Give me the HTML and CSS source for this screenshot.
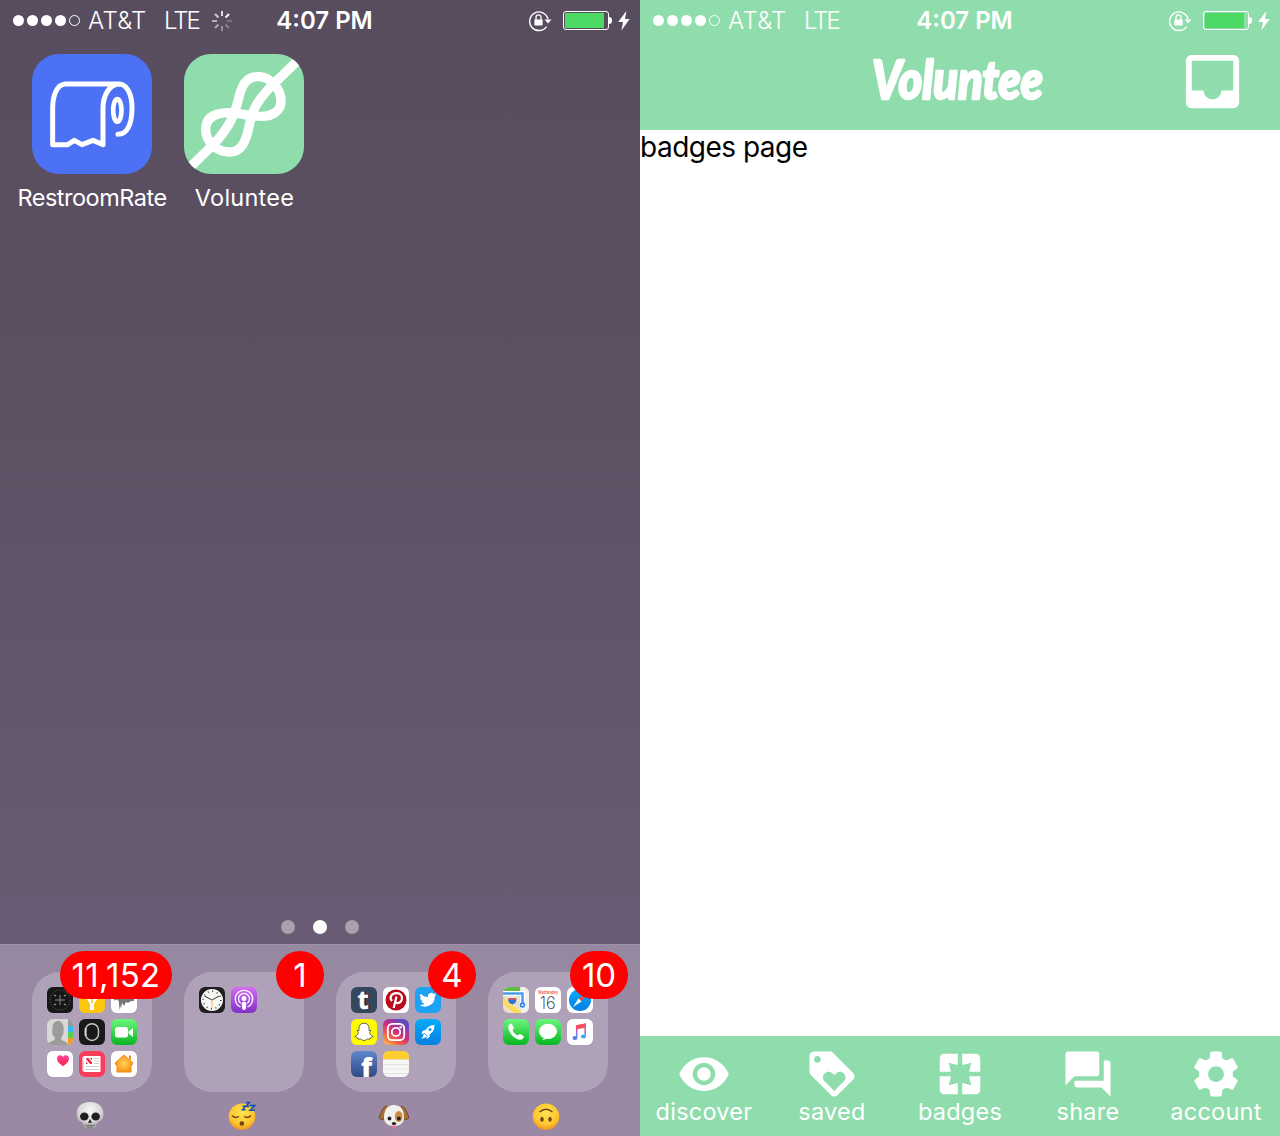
FILE: index.html
```html
<!DOCTYPE html>
<html lang="en">
<head>
<meta charset="utf-8">
<title>Voluntee</title>
<link rel="stylesheet" href="styles.css">
</head>
<body>
<svg class="defs" aria-hidden="true">
  <defs>
    <linearGradient id="green" x2="0" y2="1"><stop stop-color="#6bf77c"/><stop offset="1" stop-color="#08b522"/></linearGradient>
    <linearGradient id="purple" x2="0" y2="1"><stop stop-color="#d56bf5"/><stop offset="1" stop-color="#8130c4"/></linearGradient>
    <linearGradient id="fb" x2="0" y2="1"><stop stop-color="#5f86cd"/><stop offset="1" stop-color="#2d4985"/></linearGradient>
    <linearGradient id="sky" x2="0" y2="1"><stop stop-color="#03abfb"/><stop offset="1" stop-color="#087fe0"/></linearGradient>
    <linearGradient id="music" x2="0" y2="1"><stop stop-color="#fb4d65"/><stop offset=".55" stop-color="#b45fe0"/><stop offset="1" stop-color="#3fa6f5"/></linearGradient>
    <linearGradient id="insta" x1="0" y1="1" x2=".7" y2="0"><stop stop-color="#fdc75a"/><stop offset=".3" stop-color="#f5673f"/><stop offset=".6" stop-color="#cb2d80"/><stop offset="1" stop-color="#5b4bc4"/></linearGradient>
    <linearGradient id="heart" x2="0" y2="1"><stop stop-color="#ff3fa0"/><stop offset="1" stop-color="#f9283c"/></linearGradient>
    <radialGradient id="home"><stop stop-color="#ffd35c"/><stop offset="1" stop-color="#f99514"/></radialGradient>
    <radialGradient id="face" cx=".5" cy=".35" r=".65"><stop stop-color="#ffe450"/><stop offset=".7" stop-color="#fdc52f"/><stop offset="1" stop-color="#ec9420"/></radialGradient>
    <radialGradient id="bone" cx=".5" cy=".3" r=".7"><stop stop-color="#f7f7f7"/><stop offset=".6" stop-color="#d7d7d9"/><stop offset="1" stop-color="#87878d"/></radialGradient>
    <symbol id="rotation-lock" viewBox="0 0 24 22">
      <path d="M18.6 16.6A9.3 9.3 0 1 1 20 9" fill="none" stroke="#fff" stroke-width="1.4"/>
      <path d="M16.500 9.500h7l-3.500 4z" fill="#fff"/>
      <rect x="6.400" y="9.400" width="8.200" height="6" rx=".6" fill="#fff"/>
      <path d="M8 10V7.300a2.500 2.500 0 0 1 5 0V10" fill="none" stroke="#fff" stroke-width="1.300"/>
    </symbol>
    <symbol id="bolt" viewBox="0 0 12 20"><path d="M8.300 0 .2 11H5L3.400 19.600 11.700 8H7z" fill="#fff"/></symbol>
  </defs>
</svg>

<main class="screens">
  <section class="screen home">
    <header class="status">
      <div class="status-left">
        <span class="signal"><i></i><i></i><i></i><i></i><i class="empty"></i></span>
        <span class="carrier">AT&amp;T</span><span class="network">LTE</span>
        <svg class="spinner" viewBox="-10 -10 20 20" stroke="#fff" stroke-width="1.9">
          <path d="M0-5V-10" opacity=".85"/><path d="M3.5-3.5 7-7"/><path d="M5 0H10" opacity=".2"/><path d="M3.5 3.5 7 7" opacity=".3"/><path d="M0 5V10" opacity=".4"/><path d="M-3.5 3.5-7 7" opacity=".5"/><path d="M-5 0H-10" opacity=".6"/><path d="M-3.5-3.5-7-7" opacity=".7"/>
        </svg>
      </div>
      <time class="clock">4:07 PM</time>
      <div class="status-right">
        <svg class="lock"><use href="#rotation-lock"/></svg>
        <span class="battery"></span>
        <svg class="bolt"><use href="#bolt"/></svg>
      </div>
    </header>

    <div class="apps">
      <div class="app">
        <svg class="app-icon blue" viewBox="96 162 360 360" fill="none" stroke="#fff" stroke-width="15" stroke-linecap="round" stroke-linejoin="round">
          <path d="M357 252H195C168 255 158 290 158 325V434H203L223 421 246 434 279 421 309 434V325C309 288 327 253 357 252C382 252 396 285 396 325C396 375 380 403 354 403"/>
          <ellipse cx="352" cy="331" rx="12.5" ry="34" stroke-width="14"/>
        </svg>
        <span class="app-name rate">RestroomRate</span>
      </div>
      <div class="app">
        <svg class="app-icon mint" viewBox="552 162 360 360" fill="none" stroke="#fff" stroke-width="28">
          <path d="M560 512 645 428C690 380 705 340 716 295C728 240 750 229 778 230C810 232 843 265 843 303C843 335 815 349 785 349C745 349 715 337 685 338C645 339 617 352 617 388C617 425 650 457 690 456C722 455 736 430 746 385C756 330 770 305 810 262L905 170"/>
        </svg>
        <span class="app-name volun">Voluntee</span>
      </div>
    </div>

    <div class="pager"><i></i><i class="current"></i><i></i></div>

    <footer class="dock">
      <div class="folder">
        <div class="folder-box">
          <svg class="mini" viewBox="0 0 26 26"><rect width="26" height="26" fill="#171719"/><circle cx="13" cy="13" r="10" fill="none" stroke="#666" stroke-width="1" stroke-dasharray="1 1.4"/><path d="M13 8v10M8 13h10" stroke="#888"/><path d="M7 8l2 1M19 8l-2 1M7 18l2-1M19 18l-2-1" stroke="#bbb"/></svg>
          <svg class="mini" viewBox="0 0 26 26"><rect width="26" height="26" fill="#fdc60a"/><path d="M6 9l5 8v6h4v-6l5-8z" fill="#fff"/><path d="M13 12v4" stroke="#fdc60a" stroke-width="1.5"/></svg>
          <svg class="mini" viewBox="0 0 26 26"><rect width="26" height="26" fill="#fff"/><path d="M3 13.500l3-1 2 2V24l1-6 1 4 1-6 2 3 2-4 2 1 3-2h3v-2H3z" fill="#77777b"/></svg>
          <svg class="mini" viewBox="0 0 26 26"><rect width="26" height="26" fill="#d8d8d6"/><path d="M21 0h5v7h-5z" fill="#999"/><path d="M21 7h5v6h-5z" fill="#35b9ef"/><path d="M21 13h5v6h-5z" fill="#55cf5a"/><path d="M21 19h5v7h-5z" fill="#f79a20"/><path d="M1 26c1-5 7-3 7-7-3-3-3-6-2.500-11C6 3 9 2 11 2s5 1 5.500 6c.5 5 0 8-2.500 11 0 4 6 2 7 7z" fill="#9b9b99"/></svg>
          <svg class="mini" viewBox="0 0 26 26"><rect width="26" height="26" fill="#19191b"/><rect x="6.500" y="4.700" width="13" height="16.800" rx="6.500" fill="none" stroke="#c9c9c6" stroke-width="1.400"/><path d="M6.600 9v8" stroke="#ddd" stroke-width="1.800"/></svg>
          <svg class="mini" viewBox="0 0 26 26"><rect width="26" height="26" fill="url(#green)"/><rect x="4" y="8" width="13" height="10.500" rx="2.500" fill="#fff"/><path d="M17.500 12.500 22 9v9l-4.500-3.500z" fill="#fff"/></svg>
          <svg class="mini" viewBox="0 0 26 26"><rect width="26" height="26" fill="#fff"/><path d="M16 15.300C12 12.500 10 10.500 10 7.700 10 4 14.500 3.200 16 6c1.500-2.800 6-2 6 1.700 0 2.800-2 4.800-6 7.600z" fill="url(#heart)"/></svg>
          <svg class="mini" viewBox="0 0 26 26"><rect width="26" height="26" fill="#fb3b5c"/><path d="M3 6h2v14H3z" fill="#f5a6b3"/><rect x="4.500" y="5" width="17" height="16" fill="#fff"/><path d="M7 7h2.500l3.500 4.500V13h-2L7.500 8.500z" fill="#e92543"/><path d="M7 10.500l2 2.500H7zM13 9.500 11 7h2z" fill="#e92543"/><path d="M15 7.500h5M15 10h5M15 12.500h5M7 15.500h13M7 18.500h13" stroke="#cfcfcf"/></svg>
          <svg class="mini" viewBox="0 0 26 26"><rect width="26" height="26" fill="#fff"/><path d="M13 4l9 8-1 2h-1v7H6v-7H5l-1-2z" fill="url(#home)" stroke="#f58b16"/><path d="M18 4.500h2v5l-2-2z" fill="#f58b16"/></svg>
        </div>
        <span class="badge wide">11,152</span>
        <svg class="emoji" viewBox="0 0 28 30" role="img" aria-label="💀"><path d="M14 1C5 1 .5 6 .5 13c0 4 1.200 6.500 4 7.500 2.300 1 3 2 3.500 5C8.500 28.500 10 29 14 29s5.500-.5 6-3.500c.5-3 1.200-4 3.500-5 2.800-1 4-3.500 4-7.500C27.500 6 23 1 14 1z" fill="url(#bone)"/><ellipse cx="8.300" cy="15.500" rx="4.300" ry="4" fill="#202022"/><ellipse cx="19.700" cy="15.500" rx="4.300" ry="4" fill="#202022"/><path d="M14 18l-2 4h1.500l.5-1 .5 1H16z" fill="#202022"/><path d="M9 24.200h10M12 24v3M16 24v3M14 24v3" stroke="#666" stroke-width=".8"/></svg>
      </div>
      <div class="folder">
        <div class="folder-box">
          <svg class="mini" viewBox="0 0 26 26"><rect width="26" height="26" fill="#1e1e20"/><circle cx="13" cy="13" r="11" fill="#f7f7f5"/><circle cx="13" cy="13" r="8.800" fill="none" stroke="#333" stroke-width="1.500" stroke-dasharray="1 3.608"/><path d="M5.500 9 13 13l7-4" fill="none" stroke="#333"/><path d="M13 12v9" stroke="#f2a65a" stroke-width=".8"/></svg>
          <svg class="mini" viewBox="0 0 26 26"><rect width="26" height="26" fill="url(#purple)"/><g fill="none" stroke="#fff" stroke-width="1.300"><path d="M9.500 20A8.700 8.700 0 1 1 16.500 20"/><path d="M9.700 16.300a5.500 5.500 0 1 1 6.600 0"/></g><circle cx="13" cy="11.500" r="2.500" fill="#fff"/><path d="M11 16q2-2 4 0l-.7 6q-1.300 1.500-2.600 0z" fill="#fff" stroke="#fff"/></svg>
        </div>
        <span class="badge">1</span>
        <svg class="emoji" viewBox="0 0 28 30" role="img" aria-label="😴"><circle cx="14" cy="15.700" r="13.300" fill="url(#face)"/><path d="M4 14.500q3.500 3.500 7 .8M16 15.300q3.500 2.700 7-.8" fill="none" stroke="#70441a" stroke-width="1.300"/><ellipse cx="13.800" cy="22.500" rx="2.300" ry="2.200" fill="#70441a"/><path d="M14.500 5.200h3l-3 3.600h3M18 1.500h3.500L18 5.500h3.500M22 4.500h5l-5 4.800h5" fill="none" stroke="#1650b5" stroke-width="1.500"/></svg>
      </div>
      <div class="folder">
        <div class="folder-box">
          <svg class="mini open" viewBox="0 0 26 26"><rect width="26" height="26" rx="6" fill="#35465d"/><g class="tumblr"><text x="8" y="22.300" fill="#111c2b" stroke="#111c2b">t</text><text x="6.800" y="21.500" fill="#fff" stroke="#fff">t</text></g></svg>
          <svg class="mini" viewBox="0 0 26 26"><rect width="26" height="26" fill="#fff"/><circle cx="13" cy="13" r="10.500" fill="#bd081c"/><path d="M10.700 21 13.500 9.500M9 14C5.500 10 9 6.200 13.500 6.200c4.300 0 6.200 3 5.300 6.300-1.100 4-5.400 4.500-6.700 2" fill="none" stroke="#fff" stroke-width="2.200"/></svg>
          <svg class="mini" viewBox="0 0 26 26"><rect width="26" height="26" fill="#1da1f2"/><path transform="translate(4 4) scale(.76)" d="M23 4.500a9 9 0 0 1-2.600.7 4.600 4.600 0 0 0 2-2.500 9 9 0 0 1-2.900 1.100 4.600 4.600 0 0 0-7.800 4.200A13 13 0 0 1 2.200 3.200a4.600 4.600 0 0 0 1.400 6.100 4.500 4.500 0 0 1-2.100-.6 4.600 4.600 0 0 0 3.700 4.600 4.600 4.600 0 0 1-2.100.1 4.600 4.600 0 0 0 4.300 3.200A9.200 9.200 0 0 1 .6 18.500 13 13 0 0 0 20.700 6.800 9.300 9.300 0 0 0 23 4.500z" fill="#fff"/></svg>
          <svg class="mini" viewBox="0 0 26 26"><rect width="26" height="26" fill="#fffc00"/><path d="M13 4.200c-3.500 0-5 2.400-5 5v2.300l-2-.1c0 1 1.500 1.500 1.500 2.300-.6 2-2 3-3.500 3.600 0 1.200 2 1.200 2.600 1.500l.5 1.300 2.400-.1c1.200.3 1.800 1.500 3.500 1.500s2.300-1.200 3.500-1.500l2.400.1.500-1.300c.6-.3 2.600-.3 2.600-1.500-1.500-.6-2.900-1.600-3.500-3.600 0-.8 1.500-1.300 1.500-2.300l-2 .1V9.200c0-2.600-1.500-5-5-5z" fill="#fff" stroke="#555" stroke-width=".9"/></svg>
          <svg class="mini" viewBox="0 0 26 26"><rect width="26" height="26" fill="url(#insta)"/><g fill="none" stroke="#fff" stroke-width="1.800"><rect x="4.800" y="4.800" width="16.400" height="16.400" rx="4.500"/><circle cx="13" cy="13" r="4.200"/></g><circle cx="17.700" cy="8.300" r="1.200" fill="#fff"/></svg>
          <svg class="mini" viewBox="0 0 26 26"><rect width="26" height="26" fill="url(#sky)"/><path d="M19.500 6C15 6 12.500 8 10.500 11L7.500 12 6.500 15l2.500-.5L8 17l-1.500 3L10 18.500l1.500-1v2.500l3-2 .5-3c3-2 4.500-4.500 4.500-9z" fill="#fff"/><circle cx="15" cy="10.500" r="1.500" fill="#0797ef"/><path d="M9 14l3.500 3.500" stroke="#0797ef" stroke-width=".8"/></svg>
          <svg class="mini open" viewBox="0 0 26 26"><rect width="26" height="26" rx="6" fill="url(#fb)"/><text class="facebook" x="10" y="25.500">f</text></svg>
          <svg class="mini" viewBox="0 0 26 26"><rect width="26" height="26" fill="#f7f7f5"/><path d="M0 0h26v8H0z" fill="#fdce2d"/><path d="M0 8.300h26" stroke="#e0c067" stroke-width=".6"/><path d="M0 13.500h26M0 18h26M0 22.500h26" stroke="#d9d9d9" stroke-width=".7"/></svg>
        </div>
        <span class="badge">4</span>
        <svg class="emoji dog" viewBox="0 0 30 30" role="img" aria-label="🐶"><path d="M8 5C4 5 3 10 .5 15q-1 3 2 3.500C7 19 8 12 10 8M22 5c4 0 5 5 7.500 10q1 3-2 3.500C23 19 22 12 20 8" fill="#a66f36" stroke="#65401d" stroke-width=".8"/><path d="M15 4C8 4 5 9 5 16.500c0 5.500 4 8.500 10 8.500s10-3 10-8.500C25 9 22 4 15 4z" fill="#f1f0ed"/><ellipse cx="19.700" cy="15.500" rx="3.800" ry="5.500" fill="#cb8b42"/><circle cx="10.500" cy="17.500" r="1.900" fill="#222"/><circle cx="19.800" cy="17.500" r="1.900" fill="#222"/><ellipse cx="15" cy="22.500" rx="2.200" ry="1.500" fill="#222"/><path d="M13.300 24.500h3.400v2q-1.700 3.500-3.400 0z" fill="#ef7b9b"/></svg>
      </div>
      <div class="folder">
        <div class="folder-box">
          <svg class="mini" viewBox="0 0 26 26"><rect width="26" height="26" fill="#e8e2cc"/><path d="M0 0h17v4H0z" fill="#62bd43"/><path d="M18 0h8v26h-8z" fill="#f2f0eb"/><path d="M0 10l19 16h-8L0 17z" fill="#fbdc54"/><path d="M0 6.500h19.500V18" fill="none" stroke="#fff" stroke-width="5"/><path d="M0 6.500h19.500V18" fill="none" stroke="#459fee" stroke-width="2.500"/><circle cx="19.500" cy="18" r="2.700" fill="#2f86e8"/><circle cx="19.500" cy="18" r="1" fill="#fff"/><path d="M5 11h8.500q1.500 5-4.200 7Q3.500 16 5 11z" fill="#3475c9" stroke="#fff" stroke-width=".7"/><path d="M5 12h8.500" stroke="#e54f49" stroke-width="1.500"/><path d="M21 0h5v4z" fill="#f5b7b9"/></svg>
          <svg class="mini calendar" viewBox="0 0 26 26"><rect width="26" height="26" fill="#fff"/><text class="weekday" x="3" y="7.200" textLength="20" lengthAdjust="spacingAndGlyphs">Wednesday</text><text class="date" x="4.700" y="21.700" textLength="16" lengthAdjust="spacingAndGlyphs">16</text></svg>
          <svg class="mini" viewBox="0 0 26 26"><rect width="26" height="26" fill="#fff"/><circle cx="13" cy="13" r="11" fill="url(#sky)"/><path d="M20 6 11.500 11.500l3 3z" fill="#f0453e"/><path d="M6 20l5.500-8.500 3 3z" fill="#fff"/></svg>
          <svg class="mini" viewBox="0 0 26 26"><rect width="26" height="26" fill="url(#green)"/><path d="M5.500 6.500Q8 3.500 9 5.200l1.800 3.300q.5 1.100-1.300 2.500 1.200 3.500 5.500 5.500 1.500-2 2.700-1.300l3 2q1 1-1.500 3.100C14 23 4 14 5.500 6.500z" fill="#fff"/></svg>
          <svg class="mini" viewBox="0 0 26 26"><rect width="26" height="26" fill="url(#green)"/><ellipse cx="13" cy="12.300" rx="9" ry="7.600" fill="#fff"/><path d="M9 18q0 2-2 3 3 0 5-2z" fill="#fff"/></svg>
          <svg class="mini" viewBox="0 0 26 26"><rect width="26" height="26" fill="#fff"/><path d="M9.700 18V7l8.500-1.700V16.500" fill="none" stroke="url(#music)" stroke-width="1.600"/><path d="M9 6.500 19 4.500v4l-10 2z" fill="#ef5067"/><ellipse cx="8" cy="19" rx="2.500" ry="2" fill="#5c79e9"/><ellipse cx="16.500" cy="17.500" rx="2.500" ry="2" fill="#49a5ef"/></svg>
        </div>
        <span class="badge two">10</span>
        <svg class="emoji" viewBox="0 0 28 30" role="img" aria-label="🙃"><circle cx="14" cy="15.700" r="13.300" fill="url(#face)"/><path d="M7.500 11Q14 5.500 20.500 11" fill="none" stroke="#70441a" stroke-width="1.400"/><ellipse cx="10" cy="18.300" rx="1.700" ry="2.500" fill="#70441a"/><ellipse cx="18" cy="18.300" rx="1.700" ry="2.500" fill="#70441a"/></svg>
      </div>
    </footer>
  </section>

  <section class="screen voluntee">
    <header class="top">
      <div class="status">
        <div class="status-left">
          <span class="signal"><i></i><i></i><i></i><i></i><i class="empty"></i></span>
          <span class="carrier">AT&amp;T</span><span class="network">LTE</span>
        </div>
        <time class="clock">4:07 PM</time>
        <div class="status-right">
          <svg class="lock"><use href="#rotation-lock"/></svg>
          <span class="battery"></span>
          <svg class="bolt"><use href="#bolt"/></svg>
        </div>
      </div>
      <div class="titlebar">
        <svg class="wordmark" viewBox="0 0 176 56"><text x="0" y="48.500" textLength="171" lengthAdjust="spacingAndGlyphs">Voluntee</text></svg>
        <svg class="inbox" viewBox="0 0 24 24"><path d="M19 3H4.990c-1.110 0-1.980.89-1.980 2L3 19c0 1.100.88 2 1.990 2H19c1.100 0 2-.9 2-2V5c0-1.110-.9-2-2-2zm0 12h-4c0 1.660-1.350 3-3 3s-3-1.340-3-3H4.990V5H19v10z"/></svg>
      </div>
    </header>
    <div class="page">badges page</div>
    <nav class="tabs">
      <a class="tab"><svg viewBox="0 0 24 24"><path d="M12 4.500C7 4.500 2.730 7.610 1 12c1.730 4.390 6 7.500 11 7.500s9.270-3.110 11-7.500c-1.730-4.390-6-7.500-11-7.500zM12 17c-2.760 0-5-2.240-5-5s2.240-5 5-5 5 2.240 5 5-2.240 5-5 5zm0-8c-1.660 0-3 1.340-3 3s1.340 3 3 3 3-1.340 3-3-1.340-3-3-3z"/></svg><span>discover</span></a>
      <a class="tab"><svg viewBox="0 0 24 24"><path d="M21.410 11.580l-9-9C12.050 2.220 11.550 2 11 2H4c-1.100 0-2 .9-2 2v7c0 .55.22 1.050.59 1.420l9 9c.36.36.86.58 1.410.58.55 0 1.050-.22 1.410-.59l7-7c.37-.36.59-.86.59-1.410 0-.55-.23-1.060-.59-1.420zM5.500 7C4.670 7 4 6.330 4 5.500S4.670 4 5.500 4 7 4.670 7 5.500 6.330 7 5.500 7zm11.770 8.270L13 19.540l-4.270-4.270C8.280 14.810 8 14.190 8 13.500c0-1.380 1.120-2.500 2.500-2.500.69 0 1.320.28 1.770.74l.73.72.73-.73c.45-.45 1.080-.73 1.770-.73 1.380 0 2.500 1.120 2.500 2.500 0 .69-.28 1.320-.73 1.770z"/></svg><span>saved</span></a>
      <a class="tab"><svg viewBox="0 0 24 24"><path d="M3 5v6h5L7 7l4 1V3H5c-1.100 0-2 .9-2 2zm5 8H3v6c0 1.100.9 2 2 2h6v-5l-4 1 1-4zm9 4l-4-1v5h6c1.100 0 2-.9 2-2v-6h-5l1 4zm2-14h-6v5l4-1-1 4h5V5c0-1.100-.9-2-2-2z"/></svg><span>badges</span></a>
      <a class="tab"><svg viewBox="0 0 24 24"><path d="M21 6h-2v9H6v2c0 .55.45 1 1 1h11l4 4V7c0-.55-.45-1-1-1zm-4 6V3c0-.55-.45-1-1-1H3c-.55 0-1 .45-1 1v14l4-4h10c.55 0 1-.45 1-1z"/></svg><span>share</span></a>
      <a class="tab"><svg viewBox="0 0 24 24"><path d="M19.430 12.980c.04-.32.07-.64.07-.98s-.03-.66-.07-.98l2.110-1.650c.19-.15.24-.42.12-.64l-2-3.460c-.12-.22-.39-.3-.61-.22l-2.490 1c-.52-.4-1.080-.73-1.690-.98l-.38-2.650C14.460 2.180 14.250 2 14 2h-4c-.25 0-.46.18-.49.42l-.38 2.650c-.61.25-1.170.59-1.690.98l-2.490-1c-.23-.09-.49 0-.61.22l-2 3.460c-.13.22-.07.49.12.64l2.110 1.650c-.04.32-.07.65-.07.98s.03.66.07.98l-2.110 1.650c-.19.15-.24.42-.12.64l2 3.460c.12.22.39.3.61.22l2.490-1c.52.4 1.080.73 1.690.98l.38 2.650c.03.24.24.42.49.42h4c.25 0 .46-.18.49-.42l.38-2.650c.61-.25 1.170-.59 1.690-.98l2.490 1c.23.09.49 0 .61-.22l2-3.460c.12-.22.07-.49-.12-.64l-2.110-1.650zM12 15.500c-1.930 0-3.500-1.570-3.500-3.500s1.570-3.500 3.500-3.500 3.500 1.570 3.500 3.500-1.570 3.500-3.500 3.500z"/></svg><span>account</span></a>
    </nav>
  </section>
</main>
</body>
</html>
```
FILE: styles.css
```css
* { box-sizing: border-box; }

body {
  margin: 0;
  font-family: Inter, "Liberation Sans", sans-serif;
  color: #fff;
}

svg { display: block; }
.defs { position: absolute; width: 0; height: 0; }

.screens {
  display: grid;
  grid-template-columns: 640px 640px;
  height: 1136px;
}

.screen {
  display: flex;
  flex-direction: column;
  height: 1136px;
}

.home { background: linear-gradient(#584d5f, #5b4f61 30%, #695b73 83%); }
.voluntee { background: #fff; }

/* status bar */
.status {
  display: grid;
  grid-template-columns: 1fr auto 1fr;
  align-items: center;
  height: 40px;
  padding: 0 10px 0 13px;
}
.status-left, .status-right, .signal { display: flex; align-items: center; }
.status-right { justify-content: flex-end; }
.signal { gap: 3px; margin-right: 8px; }
.signal i { width: 11px; height: 11px; border-radius: 50%; background: #fff; }
.signal .empty { background: none; border: 1px solid #fff; }
.carrier, .network { font-size: 24px; font-weight: 300; line-height: 40px; padding-top: 1px; }
.carrier { width: 76px; letter-spacing: 0.3px; }
.network { width: 48px; letter-spacing: -2px; }
.spinner { width: 20px; height: 20px; }
.clock { font-size: 24px; font-weight: 600; line-height: 40px; letter-spacing: 0; padding-top: 1px; margin-left: 6px; }
.lock { width: 24px; height: 22px; margin-right: 11px; }
.battery {
  position: relative;
  width: 46px;
  height: 19px;
  margin-right: 9px;
  border: 1px solid #fff;
  border-radius: 3px;
  background: linear-gradient(90deg, #4cd964 39px, transparent 39px) 1px 1px / 41px 15px no-repeat;
}
.battery::after {
  content: "";
  position: absolute;
  left: 45px;
  top: 5px;
  width: 3px;
  height: 7px;
  border-radius: 0 3px 3px 0;
  background: #fff;
}
.bolt { width: 12px; height: 20px; }

/* home screen */
.apps { display: flex; gap: 12px; padding: 14px 22px; }
.app { width: 140px; display: flex; flex-direction: column; align-items: center; }
.app-icon { width: 120px; height: 120px; border-radius: 27px; }
.blue { background: #4c71f4; }
.mint { background: #8fddac; }
.app-name { font-size: 23.5px; line-height: 30px; margin-top: 9px; white-space: nowrap; }
.rate { letter-spacing: -0.5px; }
.volun { letter-spacing: 0.25px; padding-left: 1px; }

.pager { display: flex; justify-content: center; gap: 18px; margin-top: auto; margin-bottom: 10px; }
.pager i { width: 14px; height: 14px; border-radius: 50%; background: #a99fad; }
.pager .current { background: #fff; }

.dock {
  display: flex;
  gap: 32px;
  height: 192px;
  padding: 27px 32px 0;
  background: linear-gradient(#9788a1, #9a88a4);
  border-top: 1px solid #a092aa;
}
.folder { position: relative; width: 120px; }
.folder-box {
  display: grid;
  grid-template-columns: repeat(3, 26px);
  grid-auto-rows: 26px;
  gap: 6px;
  height: 120px;
  padding: 15px;
  border-radius: 28px;
  background: #afa1b7;
}
.mini { width: 26px; height: 26px; border-radius: 6px; }
.mini.open { overflow: visible; border-radius: 0; }
.tumblr text { font: 700 25px "Open Sans", sans-serif; stroke-width: 0.6px; }
.facebook { font: 800 27px "Open Sans", sans-serif; fill: #fff; }
.weekday { font: 500 4.5px Inter, sans-serif; fill: #f0453e; }
.date { font: 200 17px Inter, sans-serif; fill: #222; }
.badge {
  position: absolute;
  top: -21px;
  right: -20px;
  width: 48px;
  height: 48px;
  border-radius: 24px;
  background: #fe0000;
  font-size: 33px;
  line-height: 48px;
  text-align: center;
}
.badge.wide { width: 112px; letter-spacing: 0.3px; }
.badge.two { width: 58px; }
.emoji { width: 28px; height: 30px; margin: 9px auto 0 44px; }
.emoji.dog { width: 30px; margin-left: 43px; }

/* volunteer app */
.top { height: 130px; background: #8fddac; }
.titlebar { position: relative; height: 90px; display: flex; justify-content: center; }
.wordmark { width: 176px; height: 56px; margin-top: 10px; overflow: visible; }
.wordmark text {
  font-family: Lato, sans-serif;
  font-size: 53px;
  font-weight: 900;
  font-style: italic;
  fill: #fff;
  stroke: #fff;
  stroke-width: 2.5px;
  stroke-linejoin: round;
}
.inbox { position: absolute; right: 32.500px; top: 5.500px; width: 71px; height: 71px; fill: #fff; }

.page { flex: 1; color: #000; font-size: 28px; line-height: 35px; letter-spacing: -0.5px; }

.tabs {
  display: grid;
  grid-template-columns: repeat(5, 128px);
  height: 100px;
  background: #8fddac;
}
.tab { display: flex; flex-direction: column; align-items: center; padding-top: 11px; }
.tab svg { width: 54px; height: 54px; fill: #fff; }
.tab span { font-size: 23.5px; line-height: 30px; margin-top: -4px; letter-spacing: 0.25px; }
```
